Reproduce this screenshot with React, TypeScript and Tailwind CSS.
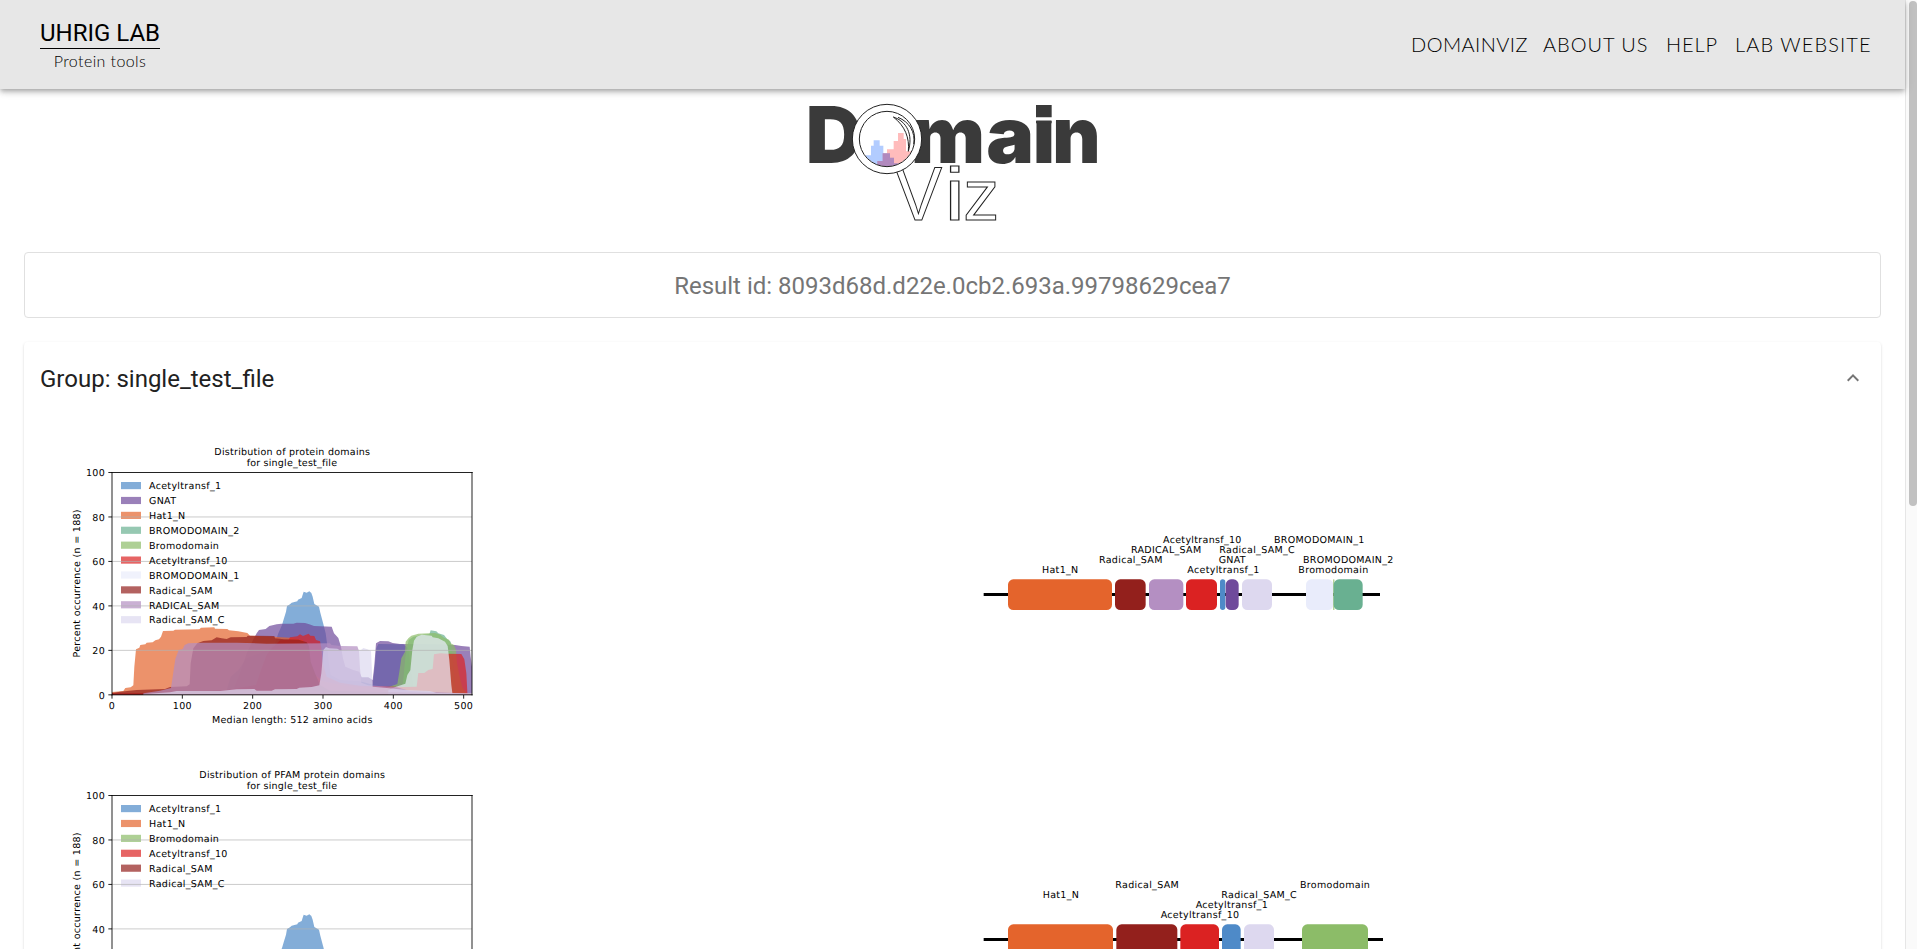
import React from "react";

type Pt = [number, number];
type Domain = { name: string; color: string; pts: Pt[] };

const BASE = 314;

const domains: Domain[] = [
  {
    name: "Acetyltransf_1",
    color: "#4e8ac8",
    pts: [[156, 312], [330, 308], [500, 300], [512, 260], [535, 240], [560, 205], [600, 190], [625, 180], [645, 160], [655, 130], [666, 105], [672, 85], [678, 65], [681, 48], [690, 43], [695, 38], [712, 34], [714, 29], [725, 24], [728, 14], [731, 5], [740, 8], [748, 4], [754, 9], [758, 20], [763, 42], [777, 50], [781, 68], [789, 98], [797, 130], [801, 160], [806, 215], [812, 255], [840, 270], [900, 274], [938, 284], [944, 230], [949, 175], [955, 162], [1030, 163], [1045, 175], [1052, 240], [1060, 290], [1100, 306], [1235, 311]],
  },
  {
    name: "GNAT",
    color: "#6f4a9b",
    pts: [[156, 312], [400, 310], [520, 300], [540, 250], [560, 190], [580, 148], [590, 130], [597, 120], [617, 117], [628, 108], [650, 103], [664, 101], [700, 101], [710, 98], [735, 99], [748, 103], [762, 108], [815, 110], [822, 130], [835, 144], [843, 170], [849, 205], [856, 230], [880, 240], [898, 245], [905, 262], [925, 262], [938, 270], [943, 225], [948, 160], [960, 153], [985, 154], [998, 159], [1020, 162], [1120, 163], [1186, 165], [1204, 168], [1229, 170], [1232, 200], [1236, 230]],
  },
  {
    name: "Hat1_N",
    color: "#e4642c",
    pts: [[156, 306], [190, 303], [196, 294], [212, 292], [220, 286], [223, 230], [228, 178], [238, 173], [241, 165], [256, 163], [260, 158], [278, 157], [286, 151], [297, 148], [303, 140], [309, 123], [340, 122], [345, 119], [418, 118], [423, 113], [463, 112], [465, 116], [502, 117], [507, 121], [535, 124], [562, 129], [570, 137], [690, 143], [728, 150], [744, 180], [752, 220], [766, 255], [785, 272], [812, 280], [870, 289], [960, 293], [1055, 297], [1085, 303], [1120, 307], [1236, 311]],
  },
  {
    name: "BROMODOMAIN_2",
    color: "#69b091",
    pts: [[980, 312], [1016, 300], [1029, 280], [1036, 200], [1046, 150], [1060, 140], [1090, 134], [1108, 133], [1112, 121], [1129, 124], [1135, 130], [1152, 135], [1162, 148], [1172, 155], [1178, 200], [1186, 290], [1200, 312]],
  },
  {
    name: "Bromodomain",
    color: "#8cbc68",
    pts: [[960, 309], [984, 292], [1012, 282], [1018, 245], [1024, 205], [1035, 185], [1037, 155], [1045, 145], [1054, 137], [1075, 131], [1125, 129], [1141, 134], [1152, 143], [1167, 149], [1172, 160], [1182, 165], [1188, 180], [1191, 220], [1199, 260], [1207, 292], [1220, 312]],
  },
  {
    name: "Acetyltransf_10",
    color: "#db2222",
    pts: [[156, 310], [300, 308], [500, 300], [588, 285], [605, 235], [620, 195], [635, 175], [653, 158], [660, 151], [686, 149], [690, 142], [712, 139], [720, 133], [729, 138], [746, 131], [751, 137], [763, 138], [768, 150], [780, 154], [784, 173], [788, 220], [800, 260], [840, 278], [900, 287], [1030, 291], [1070, 290], [1075, 249], [1093, 249], [1105, 240], [1118, 237], [1122, 193], [1142, 190], [1160, 191], [1204, 192], [1213, 208], [1219, 250], [1222, 306]],
  },
  {
    name: "BROMODOMAIN_1",
    color: "#e9ecfb",
    pts: [[985, 300], [1008, 290], [1036, 281], [1042, 255], [1051, 241], [1057, 180], [1062, 152], [1070, 140], [1085, 134], [1115, 137], [1118, 142], [1135, 145], [1155, 155], [1163, 168], [1168, 210], [1174, 285], [1177, 309]],
  },
  {
    name: "Radical_SAM",
    color: "#93201c",
    pts: [[156, 309], [180, 305], [230, 300], [315, 297], [330, 291], [380, 289], [389, 283], [392, 220], [400, 175], [412, 160], [430, 153], [455, 151], [470, 142], [485, 145], [500, 147], [512, 142], [560, 141], [563, 137], [643, 138], [645, 145], [672, 148], [716, 149], [740, 157], [747, 168], [752, 215], [765, 250], [780, 285], [810, 302], [1236, 312]],
  },
  {
    name: "RADICAL_SAM",
    color: "#b48fc2",
    pts: [[250, 310], [300, 302], [333, 294], [341, 240], [346, 207], [356, 180], [368, 177], [374, 165], [385, 160], [430, 158], [530, 158], [620, 161], [810, 160], [815, 165], [842, 168], [892, 169], [897, 183], [900, 235], [904, 278], [925, 286], [1010, 292], [1050, 303], [1130, 307], [1236, 311]],
  },
  {
    name: "Radical_SAM_C",
    color: "#ddd8ef",
    pts: [[250, 312], [330, 307], [350, 303], [480, 303], [530, 298], [583, 297], [590, 302], [635, 302], [645, 298], [710, 297], [718, 293], [755, 291], [778, 286], [784, 250], [790, 180], [798, 171], [807, 175], [832, 176], [840, 181], [895, 180], [903, 180], [910, 174], [922, 178], [933, 183], [938, 290], [980, 294], [1040, 300], [1110, 303], [1130, 309], [1236, 310]],
  },
];

const pfamNames = ["Acetyltransf_1", "Hat1_N", "Bromodomain", "Acetyltransf_10", "Radical_SAM", "Radical_SAM_C"];
const pfamDomains = domains.filter((d) => pfamNames.includes(d.name));

function areaPath(pts: Pt[]) {
  let d = `M${pts[0][0]} ${BASE}V${pts[0][1]}`;
  for (let i = 1; i < pts.length; i++) d += `L${pts[i][0]} ${pts[i][1]}`;
  return d + `V${BASE}Z`;
}

const PLOT_FONT = "'DejaVu Sans', sans-serif";

function DistributionChart({ title, width, items }: { title: string; width: number; items: Domain[] }) {
  return (
    <svg className="ml-5 block h-[323px] w-[430px]" viewBox="0 0 1290 969" fontFamily={PLOT_FONT} fontSize={28.6} letterSpacing={0.9} textRendering="geometricPrecision">
      <text x={697} y={76} textAnchor="middle" textLength={width}>{title}</text>
      <text x={696} y={109} textAnchor="middle" textLength={272}>for single_test_file</text>
      <g transform="translate(0 480)">
        {items.map((d) => (
          <path key={d.name} d={areaPath(d.pts)} fill={d.color} fillOpacity={0.7} />
        ))}
      </g>
      {items.map((d, i) => (
        <rect key={d.name} x={183} y={156 + i * 44.7} width={60} height={21.5} fill={d.color} fillOpacity={0.7} />
      ))}
      {[80, 60, 40, 20].map((v) => (
        <path key={v} d={`M156 ${794.5 - v * 6.67}H1236`} stroke="#b0b0b0" strokeOpacity={0.8} strokeWidth={2.5} />
      ))}
      {[0, 20, 40, 60, 80, 100].map((v) => (
        <g key={v}>
          <path d={`M145 ${794.5 - v * 6.67}H156`} stroke="#000" strokeWidth={2.6} />
          <text x={135} y={805.5 - v * 6.67} textAnchor="end">{v}</text>
        </g>
      ))}
      {[0, 100, 200, 300, 400, 500].map((v) => (
        <g key={v}>
          <path d={`M${156 + v * 2.11} 795V806`} stroke="#000" strokeWidth={2.6} />
          <text x={156 + v * 2.11} y={838} textAnchor="middle">{v}</text>
        </g>
      ))}
      <path d="M156 126V796M1236 126V796" stroke="#000" strokeWidth={2.6} />
      <path d="M155 127.5H1238M155 794.5H1238" stroke="#000" strokeWidth={2.6} />
      {items.map((d, i) => (
        <text key={d.name} x={267} y={178 + i * 44.7}>{d.name}</text>
      ))}
      <text x={697} y={879} textAnchor="middle" textLength={482}>Median length: 512 amino acids</text>
      <text transform="translate(61 460) rotate(-90)" textAnchor="middle" textLength={445}>Percent occurrence (n = 188)</text>
    </svg>
  );
}

type Box = { x: number; w: number; color: string };
type Label = { x: number; y: number; text: string };

const allBoxes: Box[] = [
  { x: 114, w: 312, color: "#e4642c" },
  { x: 435, w: 92, color: "#93201c" },
  { x: 537, w: 103, color: "#b48fc2" },
  { x: 648, w: 93, color: "#db2222" },
  { x: 750, w: 16, color: "#4e8ac8" },
  { x: 767, w: 39, color: "#6f4a9b" },
  { x: 816, w: 90, color: "#ddd8ef" },
  { x: 1008, w: 82, color: "#e9ecfb" },
  { x: 1090, w: 3, color: "#8cbc68" },
  { x: 1091, w: 87, color: "#69b091" },
];
const allLabels: Label[] = [
  { x: 216, y: 160, text: "Hat1_N" },
  { x: 387, y: 130, text: "Radical_SAM" },
  { x: 483, y: 100, text: "RADICAL_SAM" },
  { x: 579, y: 70, text: "Acetyltransf_10" },
  { x: 748, y: 100, text: "Radical_SAM_C" },
  { x: 746, y: 130, text: "GNAT" },
  { x: 652, y: 160, text: "Acetyltransf_1" },
  { x: 912, y: 70, text: "BROMODOMAIN_1" },
  { x: 999, y: 130, text: "BROMODOMAIN_2" },
  { x: 985, y: 160, text: "Bromodomain" },
];
const pfamBoxes: Box[] = [
  { x: 114, w: 315, color: "#e4642c" },
  { x: 439, w: 183, color: "#93201c" },
  { x: 631, w: 116, color: "#db2222" },
  { x: 756, w: 56, color: "#4e8ac8" },
  { x: 822, w: 90, color: "#ddd8ef" },
  { x: 996, w: 198, color: "#8cbc68" },
];
const pfamLabels: Label[] = [
  { x: 218, y: 99, text: "Hat1_N" },
  { x: 436, y: 69, text: "Radical_SAM" },
  { x: 754, y: 99, text: "Radical_SAM_C" },
  { x: 677, y: 129, text: "Acetyltransf_1" },
  { x: 572, y: 159, text: "Acetyltransf_10" },
  { x: 990, y: 69, text: "Bromodomain" },
];

function DomainDiagram({ boxes, labels, end }: { boxes: Box[]; labels: Label[]; end: number }) {
  return (
    <svg className="block h-[100px] w-[440px]" viewBox="0 0 1320 300" fontFamily={PLOT_FONT} fontSize={28.6} letterSpacing={0.9} textRendering="geometricPrecision">
      <path d={`M41 223.5H${end}`} stroke="#000" strokeWidth={8.5} />
      {boxes.map((b) => (
        <rect key={b.x} x={b.x} y={178} width={b.w} height={92} rx={Math.min(16, b.w / 2)} fill={b.color} />
      ))}
      {labels.map((l) => (
        <text key={l.text} x={l.x} y={l.y}>{l.text}</text>
      ))}
    </svg>
  );
}

function Logo() {
  return (
    <svg className="mx-auto mt-px block h-[140px] w-[325px]" viewBox="0 0 975 420">
      <defs>
        <clipPath id="lens">
          <circle cx="291" cy="147" r="82" />
        </clipPath>
      </defs>
      <g fill="#3a3a3a" fontFamily="Inter, sans-serif" fontWeight={900} fontSize={235}>
        <text x={47} y={219}>D</text>
        <text x={362} y={219} textLength={223} lengthAdjust="spacingAndGlyphs">m</text>
        <text x={589} y={219} textLength={144} lengthAdjust="spacingAndGlyphs">a</text>
        <text x={728} y={219} textLength={67} lengthAdjust="spacingAndGlyphs">i</text>
        <text x={787} y={219} textLength={145} lengthAdjust="spacingAndGlyphs">n</text>
      </g>
      <rect x="725" y="20" width="73" height="72" fill="#fff" />
      <path d="M738 45H785V82H738ZM738 92H785V100H738Z" fill="#3a3a3a" />
      <g fill="#fff" stroke="#222" strokeWidth={3} fontFamily="'Liberation Sans', sans-serif" fontSize={222}>
        <text x={314} y={391} fontSize={227} textLength={142} lengthAdjust="spacingAndGlyphs">V</text>
        <text x={463} y={391} textLength={63} lengthAdjust="spacingAndGlyphs">i</text>
        <text x={520} y={391} fontSize={217} textLength={108} lengthAdjust="spacingAndGlyphs">z</text>
      </g>
      <circle cx="291" cy="147" r="104" fill="#fff" stroke="#222" strokeWidth="3" />
      <g clipPath="url(#lens)">
        <path d="M227 240V196H243V167H251V151H269V167H280V190H300V203H312V220H324V240Z" fill="#6699ff" fillOpacity="0.5" />
        <path d="M262 240V213H278V190H291V178H311V153H324V129H341V147H348V184H380V240Z" fill="#ff7a7a" fillOpacity="0.5" />
        <path d="M262 240V213H278V190H300V203H312V220H324V240Z" fill="#8a6fc0" fillOpacity="0.5" />
      </g>
      <circle cx="291" cy="147" r="83" fill="none" stroke="#222" strokeWidth="3" />
      <path d="M310 81C350 94 370 133 355 184C359 143 345 108 310 81ZM324 82C358 96 377 126 371 163" fill="#fff" stroke="#222" strokeWidth="3" />
    </svg>
  );
}

export default function App() {
  return (
    <div className="flex h-[949px] w-full overflow-hidden bg-white font-[Roboto,sans-serif]">
      <div className="flex min-w-0 flex-1 flex-col">
        <header className="z-10 flex h-[89px] shrink-0 items-center justify-between bg-[#e7e7e7] px-10 shadow-[0_2px_4px_-1px_rgba(0,0,0,0.2),0_4px_5px_0_rgba(0,0,0,0.14),0_1px_10px_0_rgba(0,0,0,0.12)]">
          <div className="flex w-[120px] flex-col items-center">
            <div className="h-8 w-full whitespace-nowrap border-b border-black pt-px text-center text-2xl leading-[30px] text-black">UHRIG LAB</div>
            <div className="font-[Lato,sans-serif] text-base leading-6 font-light tracking-[0.4px] text-black">Protein tools</div>
          </div>
          <nav className="-mr-[7px] flex pb-0.5 font-[Lato,sans-serif] text-xl leading-6 font-light text-black">
            <a className="w-[132px] whitespace-nowrap tracking-[0.45px]">DOMAINVIZ</a>
            <a className="w-[123px] whitespace-nowrap tracking-[0.95px]">ABOUT US</a>
            <a className="w-[69px] whitespace-nowrap tracking-[0.9px]">HELP</a>
            <a className="w-[137px] whitespace-nowrap tracking-[1.1px]">LAB WEBSITE</a>
          </nav>
        </header>
        <main className="flex flex-col px-6">
          <Logo />
          <div className="mt-[22px] flex h-[66px] shrink-0 items-center justify-center rounded border border-[#e0e0e0] pt-0.5 text-2xl text-[#757575]">
            Result id: 8093d68d.d22e.0cb2.693a.99798629cea7
          </div>
          <section className="mt-6 rounded shadow-[0_2px_1px_-1px_rgba(0,0,0,0.2),0_1px_1px_0_rgba(0,0,0,0.14),0_1px_3px_0_rgba(0,0,0,0.12)]">
            <div className="flex h-[88px] items-start justify-between px-4 pt-[21px]">
              <h2 className="text-2xl text-[#212121]">Group: single_test_file</h2>
              <svg className="mt-[3px] h-6 w-6" viewBox="0 0 24 24" fill="#757575">
                <path d="M12 8l-6 6 1.41 1.41L12 10.83l4.59 4.58L18 14z" />
              </svg>
            </div>
            <div className="grid grid-cols-[930px_1fr] px-4">
              <DistributionChart title="Distribution of protein domains" width={468} items={domains} />
              <div className="pt-[90px]">
                <DomainDiagram boxes={allBoxes} labels={allLabels} end={1230} />
              </div>
              <DistributionChart title="Distribution of PFAM protein domains" width={558} items={pfamDomains} />
              <div className="pt-[112px]">
                <DomainDiagram boxes={pfamBoxes} labels={pfamLabels} end={1239} />
              </div>
            </div>
          </section>
        </main>
      </div>
      <div className="flex w-3 shrink-0 justify-end border-l border-[#e6e6e6] bg-[#fafafa] pt-px">
        <div className="h-[505px] w-2 rounded-full bg-[#c1c1c1]" />
      </div>
    </div>
  );
}
